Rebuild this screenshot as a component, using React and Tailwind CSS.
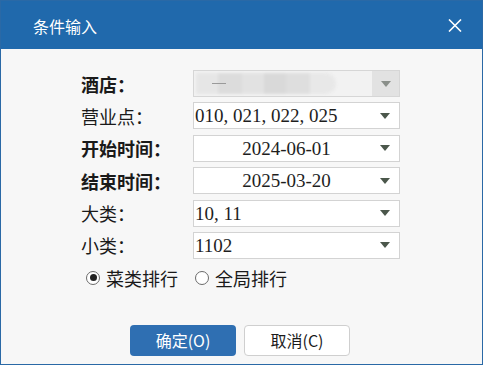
import React from 'react';

const cjk = { fontFamily: '"Noto Sans CJK SC", "Noto Sans", sans-serif' };
const serif = { fontFamily: '"Liberation Serif", "Noto Sans CJK SC", serif' };

function Arrow({ light }) {
  return (
    <svg width="10" height="6" viewBox="0 0 10 6" className="shrink-0">
      <path d="M0 0 L10 0 L5 6 Z" fill={light ? '#8a8f8a' : '#4b574b'} />
    </svg>
  );
}

function Field({ label, bold, value, center }) {
  return (
    <div className="flex items-center h-[27px]">
      <div
        className={`w-[112px] text-[18px] leading-none text-[#1a1a1a] ${bold ? 'font-bold' : ''}`}
        style={cjk}
      >
        {label}
      </div>
      <div className="w-[207px] h-[27px] bg-white border border-[#d3d3d3] flex items-center">
        <div
          className={`flex-1 pl-[1px] text-[19px] leading-none text-[#1e1e1e] ${center ? 'text-center pl-[8px]' : ''}`}
          style={serif}
        >
          {value}
        </div>
        <div className="w-[28px] flex justify-center">
          <Arrow />
        </div>
      </div>
    </div>
  );
}

function Radio({ checked, label }) {
  return (
    <div className="flex items-center">
      <div className="w-[14px] h-[14px] rounded-full border border-[#6b6b6b] bg-white flex items-center justify-center">
        {checked && <div className="w-[7px] h-[7px] rounded-full bg-[#222]" />}
      </div>
      <span className="ml-[6px] text-[18px] leading-none text-[#1a1a1a]" style={cjk}>
        {label}
      </span>
    </div>
  );
}

export default function App() {
  return (
    <div className="w-[484px] h-[366px] bg-white relative overflow-hidden">
      <div className="w-[483px] h-[365px] border border-[#2a69a6] bg-[#f7f7f7] flex flex-col">
        <div className="h-[48px] bg-[#2069ac] flex items-center justify-between pl-[32px] pr-[20px] shrink-0">
          <span className="text-white text-[16px] leading-none mt-[2px]" style={cjk}>条件输入</span>
          <svg width="14" height="13" viewBox="0 0 14 13">
            <path d="M1 0.5 L13 12.5 M13 0.5 L1 12.5" stroke="#ffffff" strokeWidth="1.6" />
          </svg>
        </div>

        <div className="pl-[80px] pt-[21px] flex flex-col gap-[5.4px]">
          <div className="flex items-center h-[27px]">
            <div className="w-[112px] text-[18px] leading-none font-bold text-[#1a1a1a]" style={cjk}>
              酒店：
            </div>
            <div className="w-[207px] h-[27px] bg-[#f2f2f2] border border-[#d6d6d6] flex items-center relative overflow-hidden">
              <div className="absolute left-[2px] top-[2px] w-[140px] h-[21px] flex blur-[1.5px]">
                <div className="w-[22px] bg-[#e6e6e6]" />
                <div className="w-[24px] bg-[#dcdcdc]" />
                <div className="w-[22px] bg-[#e2e2e2]" />
                <div className="w-[22px] bg-[#d9d9d9]" />
                <div className="w-[24px] bg-[#dedede]" />
                <div className="w-[26px] bg-[#e8e8e8] rounded-r-full" />
              </div>
              <div className="absolute left-[18px] top-[12px] w-[14px] h-[1px] bg-[#9a9a9a]" />
              <div className="flex-1" />
              <div className="w-[27px] h-full bg-[#e2e2e2] flex items-center justify-center">
                <Arrow light />
              </div>
            </div>
          </div>
          <Field label="营业点：" value="010, 021, 022, 025" />
          <Field label="开始时间：" bold value="2024-06-01" center />
          <Field label="结束时间：" bold value="2025-03-20" center />
          <Field label="大类：" value="10, 11" />
          <Field label="小类：" value="1102" />

          <div className="flex items-center h-[20px] mt-[3.5px] pl-[5px]">
            <Radio checked label="菜类排行" />
            <div className="ml-[17px]">
              <Radio label="全局排行" />
            </div>
          </div>
        </div>

        <div className="flex pl-[129px] mt-[37px] gap-[8px]">
          <button
            className="w-[106px] h-[31px] rounded-[4px] bg-[#2f6fb2] text-white text-[16px] leading-none flex items-center justify-center"
            style={cjk}
          >
            确定(O)
          </button>
          <button
            className="w-[106px] h-[31px] rounded-[4px] bg-white border border-[#cfcfcf] text-[#1a1a1a] text-[16px] leading-none flex items-center justify-center"
            style={cjk}
          >
            取消(C)
          </button>
        </div>
      </div>
    </div>
  );
}
